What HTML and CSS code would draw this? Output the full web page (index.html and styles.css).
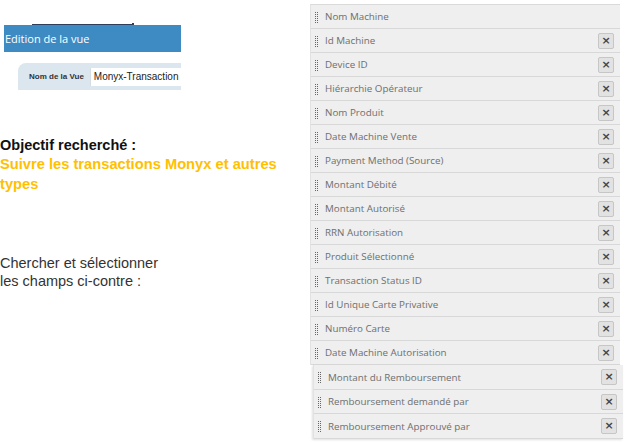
FILE: index.html
```html
<!DOCTYPE html>
<html lang="fr">
<head>
<meta charset="utf-8">
<title>Edition de la vue</title>
<link rel="stylesheet" href="styles.css">
</head>
<body>
<div class="page">
  <div class="left">
    <div class="clip">
      <div class="topline"><span class="dot"></span></div>
      <div class="header">Edition de la vue</div>
      <div class="panel">
        <span class="label">Nom de la Vue</span>
        <span class="input">Monyx-Transaction</span>
      </div>
    </div>
    <div class="objectif">
      <div class="obj-title">Objectif recherché :</div>
      <div class="obj-text">Suivre les transactions Monyx et autres types</div>
    </div>
    <div class="instructions">Chercher et sélectionner<br>les champs ci-contre :</div>
  </div>
  <div class="right">
    <ul class="list">
      <li class="row"><span class="grip"></span><span class="name">Nom Machine</span></li>
      <li class="row"><span class="grip"></span><span class="name">Id Machine</span><span class="del">&#x00D7;</span></li>
      <li class="row"><span class="grip"></span><span class="name">Device ID</span><span class="del">&#x00D7;</span></li>
      <li class="row"><span class="grip"></span><span class="name">Hiérarchie Opérateur</span><span class="del">&#x00D7;</span></li>
      <li class="row"><span class="grip"></span><span class="name">Nom Produit</span><span class="del">&#x00D7;</span></li>
      <li class="row"><span class="grip"></span><span class="name">Date Machine Vente</span><span class="del">&#x00D7;</span></li>
      <li class="row"><span class="grip"></span><span class="name">Payment Method (Source)</span><span class="del">&#x00D7;</span></li>
      <li class="row"><span class="grip"></span><span class="name">Montant Débité</span><span class="del">&#x00D7;</span></li>
      <li class="row"><span class="grip"></span><span class="name">Montant Autorisé</span><span class="del">&#x00D7;</span></li>
      <li class="row"><span class="grip"></span><span class="name">RRN Autorisation</span><span class="del">&#x00D7;</span></li>
      <li class="row"><span class="grip"></span><span class="name">Produit Sélectionné</span><span class="del">&#x00D7;</span></li>
      <li class="row"><span class="grip"></span><span class="name">Transaction Status ID</span><span class="del">&#x00D7;</span></li>
      <li class="row"><span class="grip"></span><span class="name">Id Unique Carte Privative</span><span class="del">&#x00D7;</span></li>
      <li class="row"><span class="grip"></span><span class="name">Numéro Carte</span><span class="del">&#x00D7;</span></li>
      <li class="row"><span class="grip"></span><span class="name">Date Machine Autorisation</span><span class="del">&#x00D7;</span></li>
    </ul>
    <ul class="list list-2">
      <li class="row"><span class="grip"></span><span class="name">Montant du Remboursement</span><span class="del">&#x00D7;</span></li>
      <li class="row"><span class="grip"></span><span class="name">Remboursement demandé par</span><span class="del">&#x00D7;</span></li>
      <li class="row"><span class="grip"></span><span class="name">Remboursement Approuvé par</span><span class="del">&#x00D7;</span></li>
    </ul>
  </div>
</div>
</body>
</html>
```
FILE: styles.css
```css
* { box-sizing: border-box; }
html, body { margin: 0; padding: 0; background: #fff; }
body { font-family: "Liberation Sans", Arial, sans-serif; color: #222; }

.page {
  display: grid;
  grid-template-columns: 310px 313px;
  width: 627px;
  height: 442px;
  overflow: hidden;
}

.left { padding-top: 23px; }

.clip { width: 181px; overflow: hidden; }

.topline {
  margin-left: 32px;
  width: 102px;
  height: 2px;
  border-top: 1px solid #2f3d5c;
  position: relative;
  top: 1px;
}
.topline .dot {
  position: absolute;
  right: 0;
  top: -2px;
  width: 2px;
  height: 2px;
  background: #2f3d5c;
}

.header {
  margin-left: 4px;
  height: 27px;
  background: #3e8bc4;
  color: #fff;
  font-family: "Open Sans", sans-serif;
  font-size: 11px;
  line-height: 27px;
  padding-left: 1px;
}

.panel {
  margin-top: 11px;
  margin-left: 18px;
  height: 27px;
  background: #dbe6ee;
  border-top-left-radius: 8px;
  display: flex;
  align-items: center;
  padding-left: 11px;
  gap: 6px;
  white-space: nowrap;
}
.label {
  font-size: 8px;
  font-weight: bold;
  color: #333;
}
.input {
  flex: 1;
  height: 18px;
  background: #fff;
  font-size: 10px;
  line-height: 18px;
  padding-left: 3px;
  color: #222;
  border-left: 1px solid #d4dde3;
}

.objectif { margin-top: 46px; }
.obj-title { font-size: 14.5px; font-weight: bold; line-height: 18px; color: #111; }
.obj-text {
  font-size: 14.7px;
  font-weight: bold;
  color: #ffc000;
  line-height: 20px;
  width: 290px;
}

.instructions {
  margin-top: 60px;
  font-size: 14.5px;
  line-height: 18px;
  color: #333;
}

.right { padding-top: 4px; }

.list {
  list-style: none;
  margin: 0;
  padding: 0;
  width: 310px;
  border-top: 1px solid #dadada;
  border-left: 1px solid #e2e2e2;
}
.list-2 {
  margin-left: 3px;
  border-top: none;
  box-shadow: -1px 1px 2px rgba(0,0,0,0.12);
}
.list-2 .row { height: 24.5px; padding-top: 1px; }

.row {
  display: flex;
  align-items: center;
  height: 24px;
  background: #efefef;
  border-bottom: 1px solid #d8d8d8;
  padding-left: 4px;
  padding-right: 6px;
  font-family: "Open Sans", sans-serif;
  font-size: 9.8px;
  color: #6e6e6e;
}
.grip {
  width: 4px;
  height: 12px;
  margin-right: 6px;
  flex: none;
  background:
    linear-gradient(to bottom, #efefef 50%, transparent 50%) 0 0 / 100% 2px,
    linear-gradient(to right, #666 50%, transparent 50%) 0 0 / 2px 100%;
}
.name { flex: 1; white-space: nowrap; }
.del {
  width: 16px;
  height: 16px;
  flex: none;
  background: #e2e2e2;
  border: 1px solid #c6c6c6;
  border-radius: 2px;
  color: #444;
  font-size: 11px;
  font-weight: bold;
  line-height: 14px;
  text-align: center;
  font-family: "DejaVu Sans", sans-serif;
}
```
